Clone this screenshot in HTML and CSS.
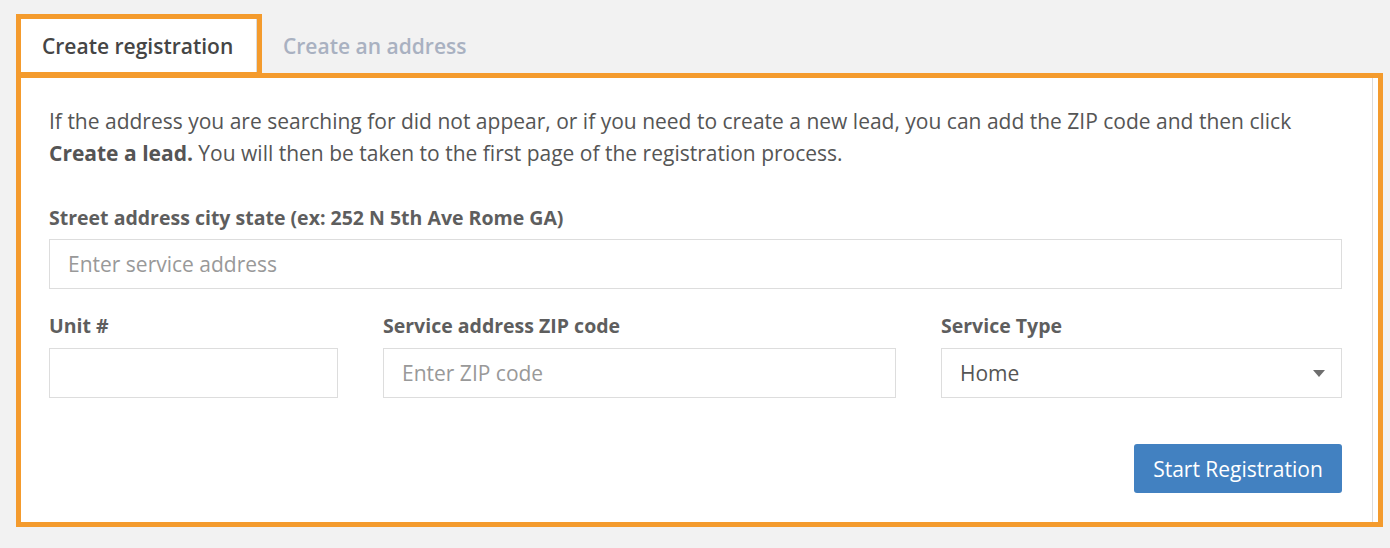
FILE: index.html
```html
<!DOCTYPE html>
<html lang="en">
<head>
<meta charset="utf-8">
<title>Create registration</title>
<link rel="stylesheet" href="styles.css">
</head>
<body>
<div class="wrap">
  <div class="tabs">
    <div class="hl tab-hl">
      <div class="tab tab-active">Create registration</div>
    </div>
    <div class="tab tab-inactive">Create an address</div>
  </div>
  <div class="hl panel-hl">
    <div class="panel">
      <p class="intro">If the address you are searching for did not appear, or if you need to create a new lead, you can add the ZIP code and then click <strong>Create a lead.</strong> You will then be taken to the first page of the registration process.</p>
      <div class="field">
        <label class="label" for="addr">Street address city state (ex: 252 N 5th Ave Rome GA)</label>
        <input class="input" id="addr" type="text" placeholder="Enter service address">
      </div>
      <div class="row">
        <div class="field">
          <label class="label" for="unit">Unit #</label>
          <input class="input" id="unit" type="text">
        </div>
        <div class="field">
          <label class="label" for="zip">Service address ZIP code</label>
          <input class="input" id="zip" type="text" placeholder="Enter ZIP code">
        </div>
        <div class="field">
          <label class="label" for="type">Service Type</label>
          <div class="select-wrap">
            <select class="input select" id="type">
              <option>Home</option>
              <option>Business</option>
            </select>
          </div>
        </div>
      </div>
      <div class="actions">
        <button class="btn" type="button">Start Registration</button>
      </div>
    </div>
  </div>
</div>
</body>
</html>
```
FILE: styles.css
```css
* { box-sizing: border-box; }
html, body {
  margin: 0;
  padding: 0;
  background: #f2f2f2;
  font-family: "Open Sans", "Liberation Sans", sans-serif;
}
.wrap {
  padding: 14px 0 0 16px;
  width: 1383px;
}
.hl {
  border: 5px solid #f49b2d;
  background: #fff;
}
.tabs {
  display: flex;
  align-items: flex-start;
  position: relative;
  z-index: 1;
}
.tab {
  height: 53px;
  line-height: 53px;
  padding-top: 1px;
  font-size: 21px;
  font-weight: 600;
  white-space: nowrap;
}
.tab-active {
  color: #454545;
  border-right: 1px solid #dcdcdc;
  width: 236px;
  padding-left: 21px;
}
.tab-hl {
  height: 63px;
}
.tab-inactive {
  color: #a9b1c1;
  margin-top: 5px;
  padding-left: 21px;
  padding-right: 20px;
}
.panel-hl {
  margin-top: -4px;
  height: 454px;
  padding-right: 5px;
}
.panel {
  height: 100%;
  border-right: 1px solid #dcdcdc;
  padding: 27px 30px 27px 28px;
  color: #555;
}
.intro {
  margin: 0 0 36px;
  font-size: 21px;
  line-height: 32px;
  color: #555;
}
.intro strong { font-weight: 700; }
.field {
  display: flex;
  flex-direction: column;
}
.label {
  font-size: 19.5px;
  font-weight: 700;
  line-height: 26px;
  color: #5e5e5e;
  margin-bottom: 8px;
  white-space: nowrap;
}
.row .label { margin-bottom: 9px; }
.input {
  height: 50px;
  border: 1px solid #dddddd;
  border-radius: 0;
  background: #fff;
  padding: 0 18px;
  font-family: "Open Sans", "Liberation Sans", sans-serif;
  font-size: 21px;
  color: #555;
  outline: none;
  width: 100%;
}
.input::placeholder { color: #999; }
.row {
  display: grid;
  grid-template-columns: 289fr 513fr 401fr;
  column-gap: 45px;
  margin-top: 24px;
}
.select-wrap {
  position: relative;
}
.select {
  appearance: none;
  -webkit-appearance: none;
  cursor: pointer;
}
.select-wrap::after {
  content: "";
  position: absolute;
  right: 17px;
  top: 22px;
  width: 0;
  height: 0;
  border-left: 6px solid transparent;
  border-right: 6px solid transparent;
  border-top: 7px solid #6e6e6e;
  pointer-events: none;
}
.actions {
  display: flex;
  justify-content: flex-end;
  margin-top: 46px;
}
.btn {
  width: 208px;
  height: 49px;
  background: #4281c1;
  border: none;
  border-radius: 3px;
  color: #fff;
  font-family: "Open Sans", "Liberation Sans", sans-serif;
  font-size: 21px;
  padding: 0;
  cursor: pointer;
}
```
